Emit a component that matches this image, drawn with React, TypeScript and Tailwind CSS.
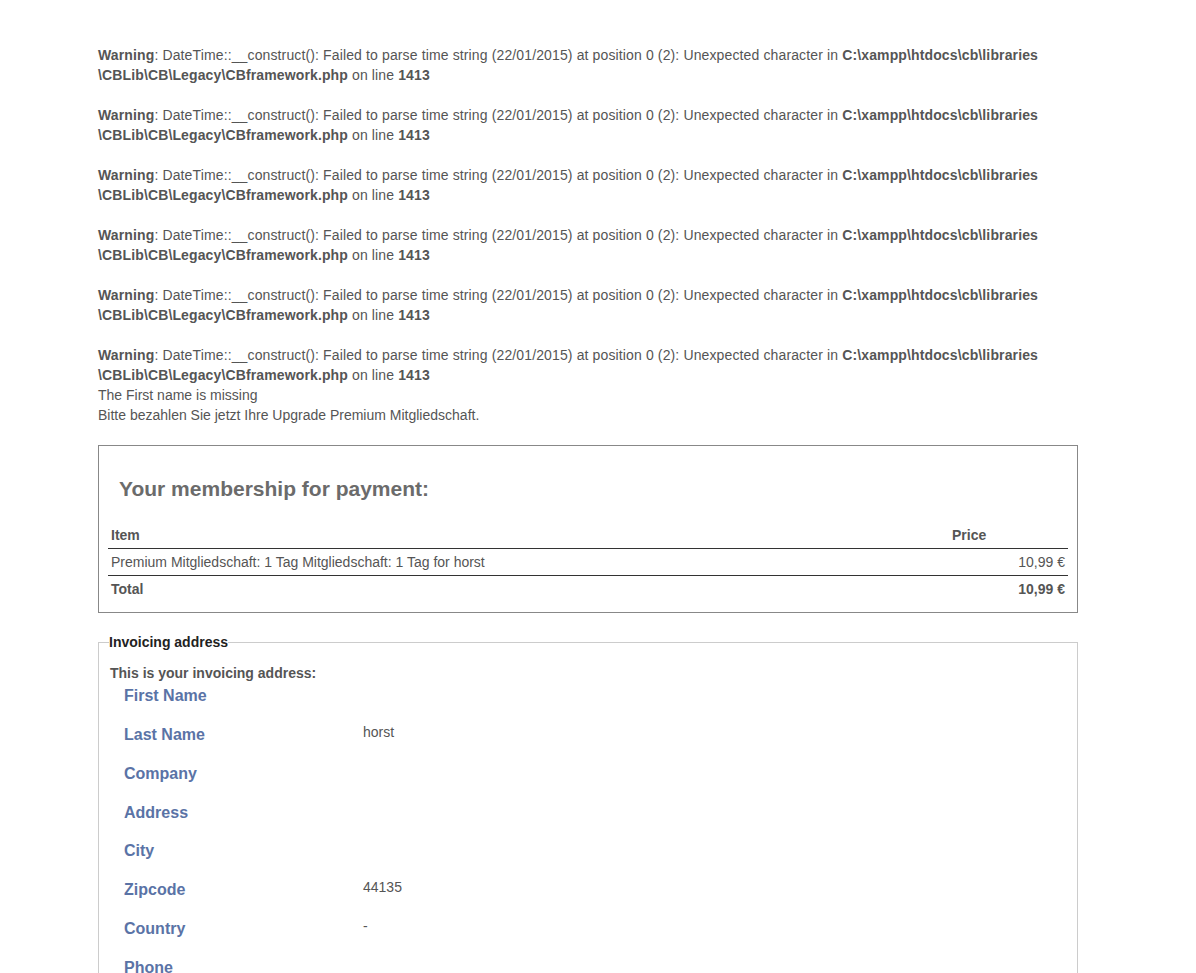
import React from "react";

const Warning = () => (
  <div className="pt-5 tracking-[0.13px]">
    <b>Warning</b>: DateTime::__construct(): Failed to parse time string (22/01/2015) at position 0 (2): Unexpected character in{" "}
    <b>C:\xampp\htdocs\cb\libraries</b>
    <br />
    <b>\CBLib\CB\Legacy\CBframework.php</b> on line <b>1413</b>
  </div>
);

const rows: [string, string][] = [
  ["First Name", ""],
  ["Last Name", "horst"],
  ["Company", ""],
  ["Address", ""],
  ["City", ""],
  ["Zipcode", "44135"],
  ["Country", "-"],
  ["Phone", ""],
  ["Email", ""],
];

export default function App() {
  return (
    <div
      className="bg-white text-[#555] text-[14px] leading-[20px] min-h-[973px]"
      style={{ fontFamily: '"Liberation Sans", Arial, sans-serif' }}
    >
      <div className="ml-[98px] w-[980px] pt-[25px]">
        {Array.from({ length: 6 }).map((_, i) => (
          <Warning key={i} />
        ))}
        <div>The First name is missing</div>
        <div>Bitte bezahlen Sie jetzt Ihre Upgrade Premium Mitgliedschaft.</div>

        <div className="mt-5 border border-[#888] px-[9px] pb-[10px]">
          <h3 className="pt-[32px] pl-[11px] text-[21px] leading-[22px] font-bold text-[#6b6b6b]">
            Your membership for payment:
          </h3>
          <table className="mt-[22px] w-full border-collapse">
            <thead>
              <tr className="h-[26px] border-b border-[#333]">
                <th className="text-left font-bold px-[3px] text-[#555]">Item</th>
                <th className="text-left font-bold px-[3px] w-[119px] text-[#555]">Price</th>
              </tr>
            </thead>
            <tbody>
              <tr className="h-[27px] border-b border-[#333]">
                <td className="px-[3px]">Premium Mitgliedschaft: 1 Tag Mitgliedschaft: 1 Tag for horst</td>
                <td className="px-[3px] text-right">10,99 €</td>
              </tr>
              <tr className="h-[27px]">
                <td className="px-[3px] font-bold">Total</td>
                <td className="px-[3px] text-right font-bold">10,99 €</td>
              </tr>
            </tbody>
          </table>
        </div>

        <fieldset className="mt-[21px] border border-[#ccc] px-[11px] pb-4">
          <legend className="font-bold text-[#222] leading-[16px] px-0 -ml-[1px]">Invoicing address</legend>
          <div className="pt-[13px] font-bold">This is your invoicing address:</div>
          <div className="pl-[14px] pt-[3px]">
            {rows.map(([l, v]) => (
              <div key={l} className="flex h-[38.86px]">
                <div className="w-[239px] text-[16px] leading-[20px] font-bold text-[#5a73a6]">{l}</div>
                <div className="leading-[15px]">{v}</div>
              </div>
            ))}
          </div>
        </fieldset>
      </div>
    </div>
  );
}
